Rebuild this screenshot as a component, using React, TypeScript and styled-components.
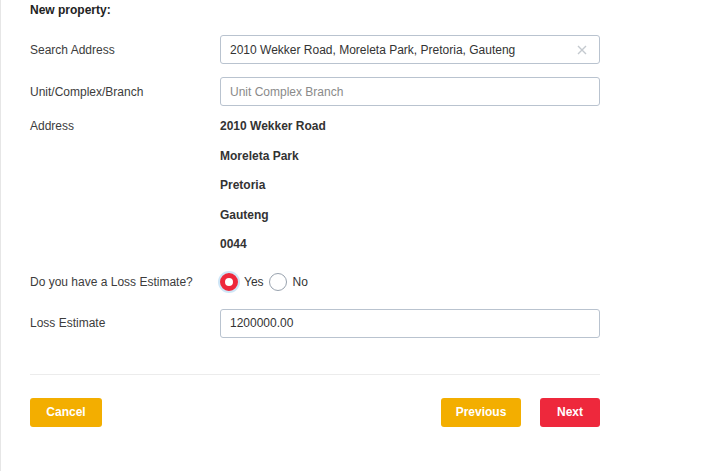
import * as React from 'react';
import styled, { createGlobalStyle } from 'styled-components';

const GlobalStyle = createGlobalStyle`
  html, body {
    margin: 0;
    padding: 0;
    background: #fff;
    font-family: 'Liberation Sans', Arial, sans-serif;
    font-size: 12px;
    color: #333;
  }
`;

const Frame = styled.div`
  min-height: 471px;
  border-left: 1px solid #e6e6e6;
  box-sizing: border-box;
  padding: 1px 0 0 29px;
`;
const Form = styled.div`
  width: 570px;
  display: flex;
  flex-direction: column;
`;
const Title = styled.div`
  font-weight: bold;
  line-height: 18px;
  color: #222;
`;
const Row = styled.div<{ mt: number; top?: boolean }>`
  display: grid;
  grid-template-columns: 190px 380px;
  align-items: ${p => (p.top ? 'start' : 'center')};
  margin-top: ${p => p.mt}px;
`;
const Label = styled.div<{ lh?: number }>`
  color: #3c3c3c;
  line-height: ${p => p.lh || 18}px;
`;
const InputWrap = styled.div`
  position: relative;
`;
const Input = styled.input`
  box-sizing: border-box;
  width: 380px;
  height: 29px;
  border: 1px solid #b9c3cf;
  border-radius: 3px;
  padding: 0 30px 0 9px;
  font-family: inherit;
  font-size: 12px;
  color: #333;
  outline: none;
  &::placeholder {
    color: #8a8a8a;
  }
`;
const Clear = styled.span`
  position: absolute;
  right: 13px;
  top: 50%;
  transform: translateY(-50%);
  display: flex;
`;
const Lines = styled.div`
  display: flex;
  flex-direction: column;
`;
const Line = styled.div`
  line-height: 29.5px;
  font-weight: bold;
  color: #333;
`;
const Radios = styled.div`
  display: flex;
  align-items: center;
  height: 24px;
`;
const RadioOpt = styled.label`
  display: flex;
  align-items: center;
  margin-right: 5px;
  color: #333;
`;
const Dot = styled.span<{ on?: boolean }>`
  box-sizing: border-box;
  width: 18px;
  height: 18px;
  border-radius: 50%;
  margin-right: 6px;
  background: #fff;
  border: ${p => (p.on ? '5px solid #ee283c' : '1px solid #98a2ae')};
  box-shadow: ${p => (p.on ? '0 0 0 2px #cfe6f7' : 'none')};
`;
const Divider = styled.div`
  height: 1px;
  background: #ececec;
  margin-top: 36px;
`;
const Actions = styled.div`
  display: flex;
  align-items: center;
  margin-top: 23px;
`;
const Spacer = styled.div`
  flex: 1;
`;
const Button = styled.button<{ w: number; red?: boolean }>`
  width: ${p => p.w}px;
  height: 29px;
  border: none;
  border-radius: 3px;
  background: ${p => (p.red ? '#ee283c' : '#f3ae00')};
  color: #fff;
  font-family: inherit;
  font-size: 12px;
  font-weight: bold;
  padding: 0;
  & + & {
    margin-left: 19px;
  }
`;

const address = ['2010 Wekker Road', 'Moreleta Park', 'Pretoria', 'Gauteng', '0044'];

export default function App() {
  return (
    <Frame>
      <GlobalStyle />
      <Form>
        <Title>New property:</Title>
        <Row mt={16}>
          <Label>Search Address</Label>
          <InputWrap>
            <Input defaultValue="2010 Wekker Road, Moreleta Park, Pretoria, Gauteng" />
            <Clear>
              <svg width="10" height="10" viewBox="0 0 10 10">
                <path d="M1 1L9 9M9 1L1 9" stroke="#c4c9cf" strokeWidth="1.4" />
              </svg>
            </Clear>
          </InputWrap>
        </Row>
        <Row mt={13}>
          <Label>Unit/Complex/Branch</Label>
          <Input placeholder="Unit Complex Branch" />
        </Row>
        <Row mt={6} top>
          <Label lh={29.5}>Address</Label>
          <Lines>
            {address.map(a => (
              <Line key={a}>{a}</Line>
            ))}
          </Lines>
        </Row>
        <Row mt={10}>
          <Label>Do you have a Loss Estimate?</Label>
          <Radios>
            <RadioOpt>
              <Dot on />
              Yes
            </RadioOpt>
            <RadioOpt>
              <Dot />
              No
            </RadioOpt>
          </Radios>
        </Row>
        <Row mt={15}>
          <Label>Loss Estimate</Label>
          <Input defaultValue="1200000.00" />
        </Row>
        <Divider />
        <Actions>
          <Button w={72}>Cancel</Button>
          <Spacer />
          <Button w={80}>Previous</Button>
          <Button w={60} red>
            Next
          </Button>
        </Actions>
      </Form>
    </Frame>
  );
}
